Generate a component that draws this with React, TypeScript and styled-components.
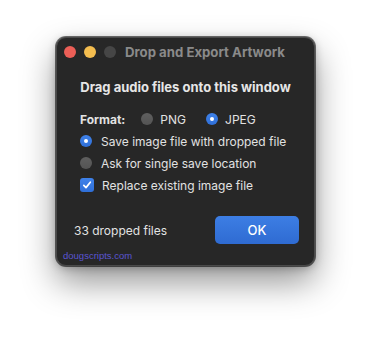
import React from "react";
import styled, { createGlobalStyle } from "styled-components";

const Global = createGlobalStyle`
  html, body { margin: 0; padding: 0; background: #ffffff; }
  body { font-family: Inter, "Noto Sans", "Liberation Sans", sans-serif; -webkit-font-smoothing: antialiased; }
`;

const Stage = styled.div`
  width: 371px;
  height: 340px;
  box-sizing: border-box;
  padding: 37px 0 0 56px;
  background: #ffffff;
`;

const Window = styled.div`
  width: 259px;
  height: 229px;
  box-sizing: border-box;
  background: #272727;
  border-radius: 10px;
  border: 1px solid #4a4a4a;
  box-shadow: 0 0 0 1px rgba(0, 0, 0, 0.55), 0 16px 34px rgba(0, 0, 0, 0.42),
    0 2px 8px rgba(0, 0, 0, 0.25);
  display: flex;
  flex-direction: column;
  color: #e2e2e2;
`;

const TitleBar = styled.div`
  height: 28px;
  display: flex;
  align-items: center;
  padding-left: 7px;
  gap: 8px;
`;

const Light = styled.span<{ $color: string }>`
  width: 12px;
  height: 12px;
  border-radius: 50%;
  background: ${(p) => p.$color};
  flex: none;
`;

const Title = styled.span`
  margin-left: 1px;
  font-size: 13.2px;
  font-weight: 700;
  color: #8a8a8a;
  white-space: nowrap;
`;

const Heading = styled.div`
  margin-top: 13px;
  text-align: center;
  font-size: 13px;
  line-height: 16px;
  font-weight: 700;
  color: #e6e6e6;
`;

const Options = styled.div`
  margin-top: 14px;
  padding-left: 23px;
  display: flex;
  flex-direction: column;
  gap: 2px;
`;

const Row = styled.div`
  height: 20px;
  display: flex;
  align-items: center;
  font-size: 12px;
  white-space: nowrap;
`;

const Label = styled.span`
  font-weight: 700;
  margin-right: 16px;
`;

const Choice = styled.span<{ $gap?: number }>`
  display: inline-flex;
  align-items: center;
  gap: ${(p) => p.$gap ?? 8}px;
  margin-right: 20px;
`;

const Radio = styled.span<{ $on?: boolean }>`
  width: 12px;
  height: 12px;
  border-radius: 50%;
  flex: none;
  box-sizing: border-box;
  background: ${(p) =>
    p.$on ? "linear-gradient(#3f82ea, #2f6fd8)" : "linear-gradient(#5f5f5f, #545454)"};
  display: flex;
  align-items: center;
  justify-content: center;
  &::after {
    content: "";
    width: 4px;
    height: 4px;
    border-radius: 50%;
    background: #ffffff;
    display: ${(p) => (p.$on ? "block" : "none")};
  }
`;

const Check = styled.span`
  width: 14px;
  height: 14px;
  border-radius: 3px;
  background: linear-gradient(#3f82ea, #2f6fd8);
  flex: none;
  display: flex;
  align-items: center;
  justify-content: center;
`;

const Footer = styled.div`
  margin-top: 21px;
  display: flex;
  align-items: center;
  justify-content: space-between;
  padding: 0 15px 0 17px;
`;

const Count = styled.span`
  font-size: 12px;
  color: #e2e2e2;
`;

const OkButton = styled.button`
  width: 84px;
  height: 28px;
  border: none;
  border-radius: 5px;
  background: linear-gradient(#3d7ee4, #2f6bd2);
  color: #ffffff;
  font-family: inherit;
  font-size: 13px;
  font-weight: 500;
  padding: 0;
`;

const Link = styled.div`
  margin-top: 6px;
  padding-left: 6px;
  font-family: "Liberation Sans", Arial, sans-serif;
  font-size: 9.5px;
  line-height: 12px;
  color: #5a55d2;
`;

export default function App() {
  return (
    <>
      <Global />
      <Stage>
        <Window>
          <TitleBar>
            <Light $color="#ec5f57" />
            <Light $color="#f4bd4f" />
            <Light $color="#464646" />
            <Title>Drop and Export Artwork</Title>
          </TitleBar>
          <Heading>Drag audio files onto this window</Heading>
          <Options>
            <Row>
              <Label>Format:</Label>
              <Choice $gap={7}>
                <Radio />
                PNG
              </Choice>
              <Choice $gap={7}>
                <Radio $on />
                JPEG
              </Choice>
            </Row>
            <Row>
              <Choice $gap={9}>
                <Radio $on />
                Save image file with dropped file
              </Choice>
            </Row>
            <Row>
              <Choice $gap={9}>
                <Radio />
                Ask for single save location
              </Choice>
            </Row>
            <Row>
              <Choice>
                <Check>
                  <svg width="10" height="10" viewBox="0 0 10 10">
                    <path
                      d="M1.8 5.3 L4 7.6 L8.3 2.2"
                      fill="none"
                      stroke="#ffffff"
                      strokeWidth="1.7"
                      strokeLinecap="round"
                      strokeLinejoin="round"
                    />
                  </svg>
                </Check>
                Replace existing image file
              </Choice>
            </Row>
          </Options>
          <Footer>
            <Count>33 dropped files</Count>
            <OkButton>OK</OkButton>
          </Footer>
          <Link>dougscripts.com</Link>
        </Window>
      </Stage>
    </>
  );
}
